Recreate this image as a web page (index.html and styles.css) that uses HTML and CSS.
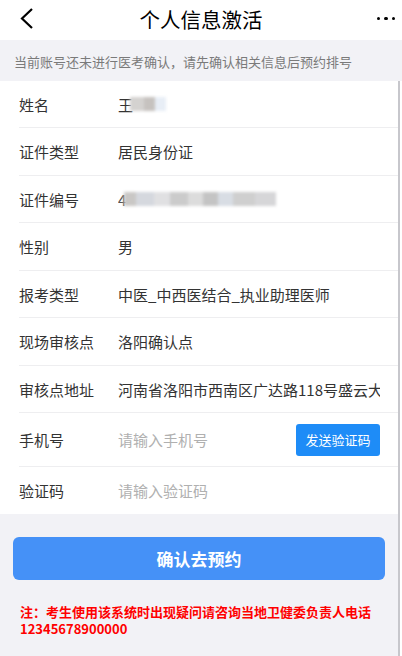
FILE: index.html
```html
<!DOCTYPE html>
<html lang="zh-CN">
<head>
  <meta charset="UTF-8">
  <meta name="viewport" content="width=device-width, initial-scale=1.0">
  <title>个人信息激活</title>
  <link rel="stylesheet" href="styles.css">
</head>
<body>
  <!-- Top bar -->
  <div class="topbar">
    <svg class="back" width="20" height="24" viewBox="0 0 20 24">
      <polyline points="14,2 4,11.5 14,21" fill="none" stroke="#000" stroke-width="2.2"/>
    </svg>
    <h1>个人信息激活</h1>
    <div class="more"><span></span><span></span><span></span></div>
  </div>

  <div class="notice">当前账号还未进行医考确认，请先确认相关信息后预约排号</div>

  <div class="main">
    <div class="scroll">
      <div class="form-list">
        <div class="row">
          <span class="label">姓名</span>
          <span class="value">王<span class="blur blur-name"></span></span>
        </div>
        <div class="row">
          <span class="label">证件类型</span>
          <span class="value">居民身份证</span>
        </div>
        <div class="row">
          <span class="label">证件编号</span>
          <span class="value"><span class="blur-first">4</span><span class="blur blur-id"></span></span>
        </div>
        <div class="row">
          <span class="label">性别</span>
          <span class="value">男</span>
        </div>
        <div class="row">
          <span class="label">报考类型</span>
          <span class="value">中医_中西医结合_执业助理医师</span>
        </div>
        <div class="row">
          <span class="label">现场审核点</span>
          <span class="value">洛阳确认点</span>
        </div>
        <div class="row">
          <span class="label">审核点地址</span>
          <span class="value">河南省洛阳市西南区广达路118号盛云大厦</span>
        </div>
        <div class="row row-phone">
          <span class="label">手机号</span>
          <span class="value placeholder">请输入手机号</span>
          <button class="send-code">发送验证码</button>
        </div>
        <div class="row">
          <span class="label">验证码</span>
          <span class="value placeholder">请输入验证码</span>
        </div>
      </div>

      <button class="confirm">确认去预约</button>

      <p class="tip">注：考生使用该系统时出现疑问请咨询当地卫健委负责人电话12345678900000</p>
    </div>
    <div class="scrollbar"></div>
  </div>
</body>
</html>
```

FILE: styles.css
```css
html, body {
  height: 100%;
}

body {
  font-family: "Noto Sans CJK SC", "Noto Sans", sans-serif;
  margin: 0;
  padding: 0;
  background-color: #fff;
  color: #333;
  display: flex;
  flex-direction: column;
}

.topbar {
  height: 40px;
  padding-bottom: 3px;
  box-sizing: border-box;
  display: flex;
  align-items: center;
  justify-content: space-between;
  padding-left: 18px;
  padding-right: 7px;
  position: relative;
}

.topbar h1 {
  position: absolute;
  left: 0;
  right: 0;
  top: 0;
  bottom: 3px;
  margin: 0;
  display: flex;
  align-items: center;
  justify-content: center;
  font-size: 20.5px;
  font-weight: normal;
  color: #000;
  pointer-events: none;
}

.back {
  display: block;
}

.more {
  display: flex;
  gap: 4px;
}

.more span {
  width: 3.5px;
  height: 3.5px;
  border-radius: 50%;
  background-color: #000;
}

.notice {
  height: 41px;
  background-color: #f2f2f6;
  font-size: 13px;
  color: #7a7a7a;
  padding-left: 14px;
  display: flex;
  align-items: center;
  padding-top: 2px;
  box-sizing: border-box;
  white-space: nowrap;
}

.main {
  flex: 1;
  display: flex;
}

.scroll {
  flex: 1;
  background-color: #f2f2f6;
  overflow: hidden;
}

.scrollbar {
  width: 2px;
  background-color: #c7c7cc;
  margin-right: 2px;
}

.form-list {
  background-color: #fff;
  padding-left: 19px;
}

.row {
  height: 47px;
  box-sizing: border-box;
  border-bottom: 1px solid #eeeef0;
  display: flex;
  align-items: center;
  font-size: 15px;
  padding-right: 18px;
  white-space: nowrap;
}

.row:nth-child(even) {
  height: 48px;
}

.row:last-child {
  border-bottom: none;
}

.row.row-phone {
  height: 54px;
}

.label {
  width: 99px;
  flex-shrink: 0;
  color: #333;
}

.value {
  flex: 1;
  overflow: hidden;
  color: #333;
  display: flex;
  align-items: center;
}

.placeholder {
  color: #b0b0b0;
}

.blur {
  display: inline-block;
  height: 14px;
  filter: blur(1.5px);
}

.blur-name {
  width: 36px;
  margin-left: -3px;
  background: linear-gradient(90deg, #d4d2d0 0 40%, #c6c2bf 40% 70%, #e8eef6 70%);
}

.blur-first {
  color: #555;
}

.blur-id {
  width: 152px;
  margin-left: -2px;
  background: linear-gradient(90deg, #c9c7c5 0 8%, #d5d8de 8% 20%, #e0e0e2 20% 30%, #cbcbcb 30% 42%, #dcdcdc 42% 52%, #c4c4c4 52% 62%, #d8dde4 62% 72%, #cfcfcf 72% 86%, #d6d6d8 86%);
}

.send-code {
  flex-shrink: 0;
  width: 84px;
  height: 32px;
  border: none;
  border-radius: 3px;
  background-color: #1e8cf7;
  color: #fff;
  font-family: inherit;
  font-size: 13px;
  padding: 0;
}

.confirm {
  display: block;
  width: calc(100% - 26px);
  margin: 23px 0 0 13px;
  height: 43px;
  border: none;
  border-radius: 6px;
  background-color: #4591f7;
  color: #fff;
  font-family: inherit;
  font-size: 17px;
  font-weight: bold;
}

.tip {
  margin: 23px 20px 0 20px;
  color: #ff0000;
  font-size: 13px;
  font-weight: bold;
  line-height: 17px;
  word-break: break-all;
}
```
